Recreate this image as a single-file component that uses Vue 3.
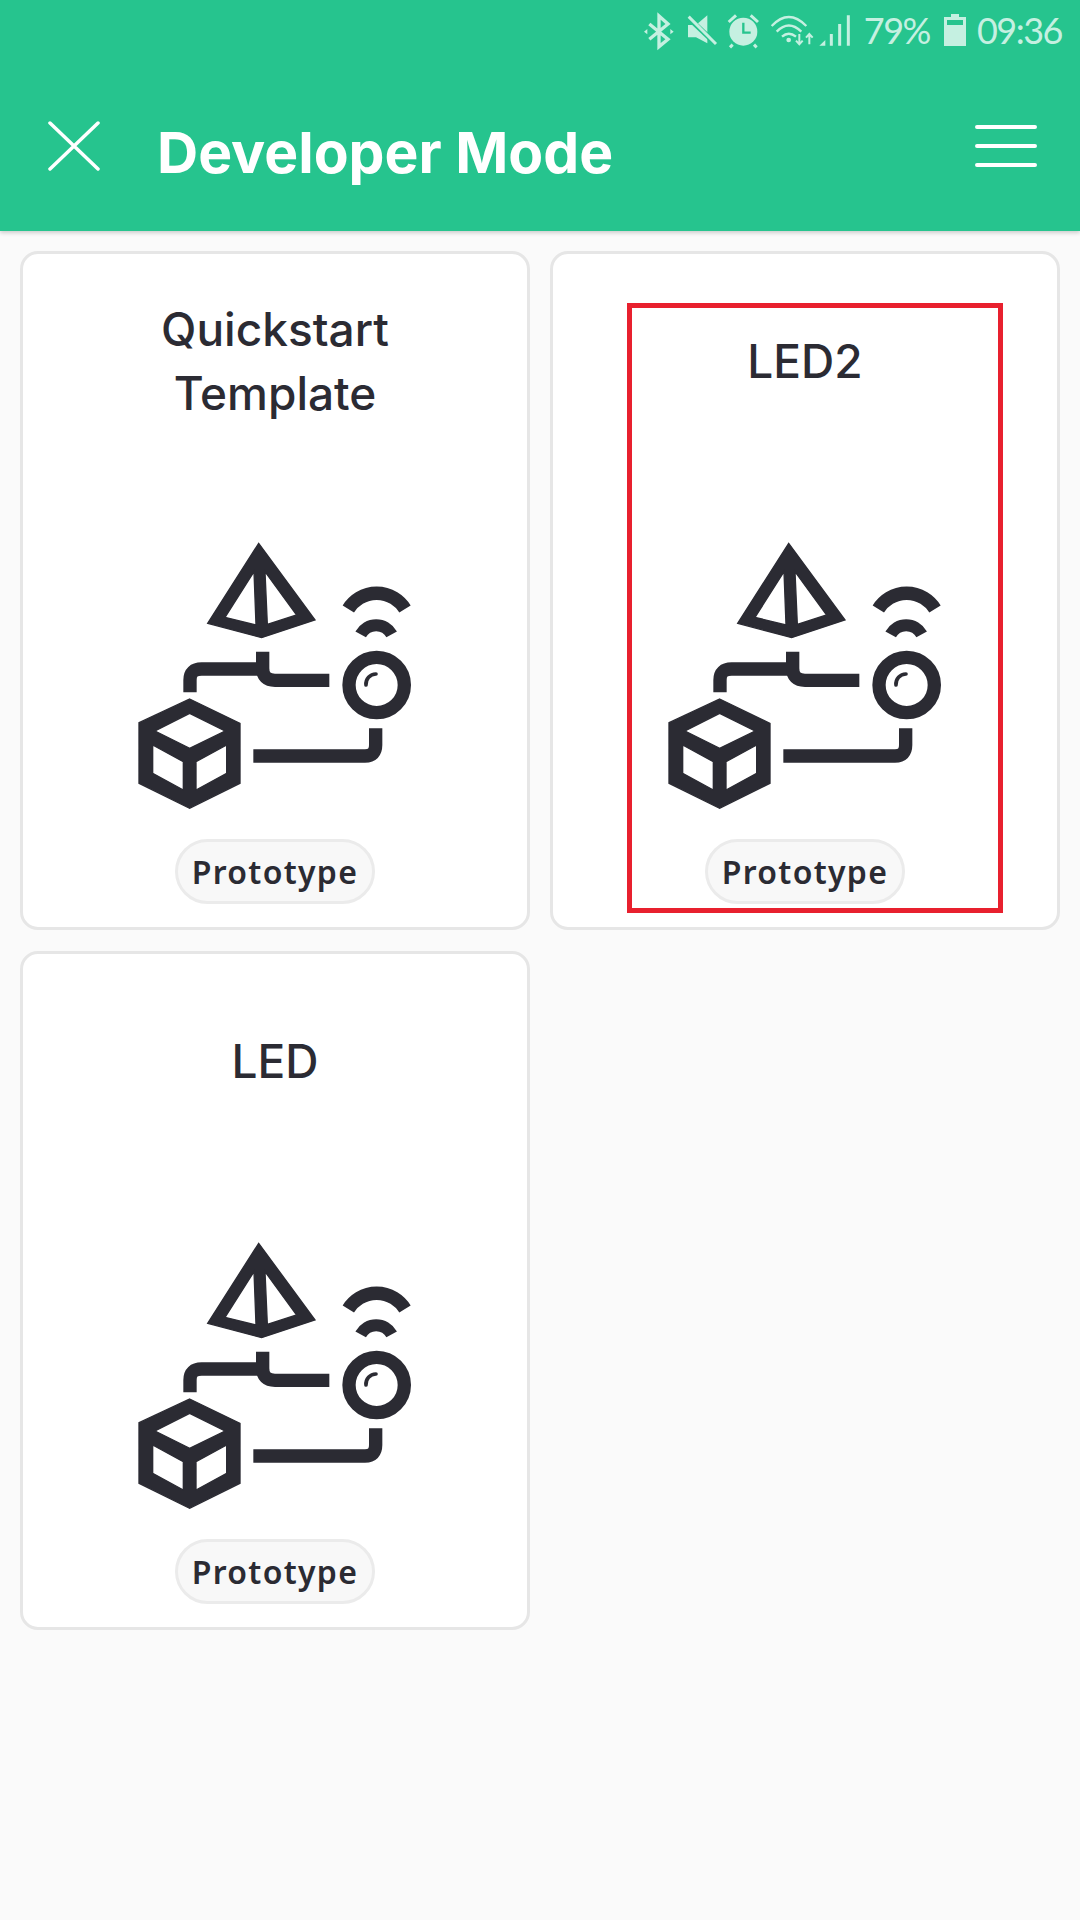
<script setup>
const projekt = [
  { namn: ['Quickstart', 'Template'] },
  { namn: ['LED2'], markerad: true },
  { namn: ['LED'] },
]
</script>

<template>
  <div class="sida">
    <header class="topp">
      <div class="statusrad">
        <svg class="statusikoner" viewBox="60 0 630 180" width="210" height="60">
          <g fill="none" stroke="#c5f0e1" stroke-width="10">
            <path d="M82 72 L138 118 L111 140 V48 L138 72 L82 118" />
          </g>
          <path d="M66 95 l10 -8 v16z M155 95 l-10 -8 v16z" fill="#c5f0e1" />
          <path d="M198 75 H222 L256 46 V130 L222 112 H198Z" fill="#c5f0e1" />
          <path d="M198 52 L280 130" stroke="#26c48e" stroke-width="16" />
          <path d="M200 50 L282 132" stroke="#c5f0e1" stroke-width="9" />
          <circle cx="364" cy="95" r="42" fill="#c5f0e1" />
          <path d="M364 68 V98 H386" fill="none" stroke="#26c48e" stroke-width="7" />
          <path d="M320 66 L342 46 M408 66 L386 46 M332 134 L324 142 M396 134 L404 142" stroke="#c5f0e1" stroke-width="9" />
          <g fill="none" stroke="#c5f0e1" stroke-width="7">
            <path d="M449 78 Q500 24 553 78" />
            <path d="M464 95 Q500 58 538 95" />
            <path d="M480 110 Q500 92 522 110" />
          </g>
          <circle cx="500" cy="120" r="7" fill="#c5f0e1" />
          <path d="M532 102 V130 M522 122 L532 133 L542 122 M562 133 V105 M552 113 L562 102 L572 113" fill="none" stroke="#c5f0e1" stroke-width="6" />
          <path d="M592 137 L610 120 V137Z" fill="#c5f0e1" />
          <path d="M628 137 V102 M653 137 V72 M679 137 V46" stroke="#c5f0e1" stroke-width="9" />
        </svg>
        <span class="statustext procent">79%</span>
        <svg class="batteri" viewBox="0 0 22 32" width="22" height="32">
          <path d="M7 0 H15 V3 H22 V32 H0 V3 H7Z M3 6 V11 H19 V6Z" fill="#c5f0e1" fill-rule="evenodd" />
        </svg>
        <span class="statustext tid">09:36</span>
      </div>
      <div class="verktyg">
        <svg class="stang" viewBox="0 0 52 50" width="52" height="50">
          <path d="M2 2 L50 48 M50 2 L2 48" stroke="#fff" stroke-width="3.5" stroke-linecap="round" />
        </svg>
        <h1 class="rubrik">Developer Mode</h1>
        <svg class="meny" viewBox="0 0 62 42" width="62" height="42">
          <path d="M2 2 H60 M2 21 H60 M2 40 H60" stroke="#fff" stroke-width="4" stroke-linecap="round" />
        </svg>
      </div>
    </header>

    <main class="rutnat">
      <article v-for="p in projekt" :key="p.namn[0]" class="kort">
        <div class="titel">
          <span v-for="rad in p.namn" :key="rad">{{ rad }}</span>
        </div>
        <svg class="bild" viewBox="0 0 930 870" width="310" height="290">
          <path
            fill="#2b2b33"
            stroke="#2b2b33"
            stroke-width="4"
            fill-rule="evenodd"
            d="M416 40 L585 270 L425 323 L263 280Z M402 125 L315 262 L408 285Z M435 125 L442 283 L530 255Z"
          />
          <path
            fill="#2b2b33"
            stroke="#2b2b33"
            stroke-width="4"
            fill-rule="evenodd"
            d="M209 507 L360 580 V760 L209 835 L57 760 V578Z M209 550 L105 603 L209 655 L315 603Z M98 645 V730 L190 780 V695Z M320 645 L228 695 V780 L320 730Z"
          />
          <g fill="none" stroke="#2b2b33" stroke-width="40">
            <path d="M685 237 A100 100 0 0 1 855 237" />
            <path d="M722 313 A53 53 0 0 1 815 313" stroke-width="36" />
            <circle cx="770" cy="465" r="83" />
            <path d="M210 487 V450 Q210 417 245 417 H425" />
            <path d="M428 365 V415 Q428 451 465 451 H628" />
            <path d="M400 678 H735 Q767 678 767 645 V595" />
            <path d="M738 465 A30 30 0 0 1 768 432" stroke-width="11" stroke-linecap="round" />
          </g>
        </svg>
        <span class="etikett">Prototype</span>
        <div v-if="p.markerad" class="ram"></div>
      </article>
    </main>
  </div>
</template>

<style>
body {
  background: #fafafa;
}
</style>

<style scoped>
.sida {
  width: 1080px;
  height: 1920px;
  background: #fafafa;
  color: #2b2b33;
}
.topp {
  height: 231px;
  background: #26c48e;
  box-shadow: 0 2px 4px rgba(0, 0, 0, 0.18);
}
.statusrad {
  height: 60px;
  display: flex;
  align-items: center;
  justify-content: flex-end;
  padding-right: 18px;
}
.statustext {
  font-family: Lato, sans-serif;
  font-size: 36px;
  letter-spacing: -1.5px;
  color: #c5f0e1;
}
.procent {
  margin-left: 12px;
}
.batteri {
  margin-left: 14px;
}
.tid {
  margin-left: 11px;
}
.verktyg {
  height: 171px;
  display: flex;
  align-items: center;
  padding: 0 43px 0 48px;
}
.rubrik {
  flex: 1;
  margin: 14px 0 0 57px;
  font-family: Inter, sans-serif;
  font-weight: 700;
  font-size: 57px;
  color: #fff;
}
.rutnat {
  display: grid;
  grid-template-columns: 510px 510px;
  gap: 21px 20px;
  padding: 20px;
}
.kort {
  position: relative;
  box-sizing: border-box;
  height: 679px;
  display: flex;
  flex-direction: column;
  align-items: center;
  background: #fff;
  border: 3px solid #e6e6e6;
  border-radius: 18px;
}
.titel {
  height: 128px;
  margin-top: 43px;
  display: flex;
  flex-direction: column;
  justify-content: center;
  align-items: center;
  font-family: Inter, sans-serif;
  font-weight: 500;
  font-size: 46px;
  line-height: 64px;
}
.bild {
  margin-top: 105px;
}
.etikett {
  box-sizing: border-box;
  height: 65px;
  margin-top: 19px;
  padding: 0 14px;
  display: flex;
  align-items: center;
  background: #f8f8f8;
  border: 3px solid #ebebeb;
  border-radius: 33px;
  font-family: "Noto Sans", sans-serif;
  font-weight: 600;
  font-size: 32px;
  letter-spacing: 1.3px;
}
.ram {
  position: absolute;
  left: 74px;
  top: 49px;
  box-sizing: border-box;
  width: 376px;
  height: 610px;
  border: 5px solid #e8202e;
}
</style>
